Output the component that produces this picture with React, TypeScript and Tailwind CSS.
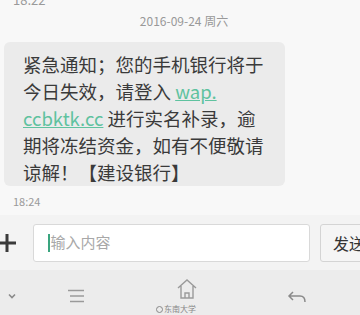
const font = { fontFamily: '"Noto Sans CJK SC", "Noto Sans", sans-serif' };

function ChevronDown() {
  return (
    <svg width="10" height="8" viewBox="0 0 10 8" fill="none" stroke="#8a8a8a" strokeWidth="1.6">
      <path d="M2 2.5 L5 5.5 L8 2.5" />
    </svg>
  );
}

function MenuIcon() {
  return (
    <svg width="18" height="14" viewBox="0 0 18 14" fill="none" stroke="#9a9a9a" strokeWidth="1.4">
      <path d="M1 1.5 H17 M3 7 H17 M3 12.5 H17" />
    </svg>
  );
}

function HomeIcon() {
  return (
    <svg width="22" height="22" viewBox="0 0 22 22" fill="none" stroke="#9a9a9a" strokeWidth="1.4">
      <path d="M2 10 L11 2 L20 10 M5 8 V20 H17 V8 M9 20 V15 H13 V20" />
    </svg>
  );
}

function BackIcon() {
  return (
    <svg width="20" height="14" viewBox="0 0 20 14" fill="none" stroke="#8a8a8a" strokeWidth="1.5">
      <path d="M6 2 L2 6 L6 10 M2 6 H13 Q18 6 18 12" />
    </svg>
  );
}

export default function App() {
  return (
    <div className="w-[360px] h-[315px] overflow-hidden bg-[#f8f8f8] flex flex-col" style={font}>
      <div className="h-[215px] shrink-0 flex flex-col">
        <div className="text-[13px] leading-[13px] text-[#9a9a9a] pl-[13px] -mt-[7px]">18:22</div>
        <div className="text-[12px] leading-[16px] text-[#999] text-center mt-[7px] pl-[8px]">2016-09-24 周六</div>
        <div className="ml-[4px] mt-[13px] w-[281px] h-[144px] bg-[#ebebeb] rounded-[6px] pl-[19px] pt-[9px] text-[18.5px] leading-[27px] text-[#3a3a3a]">
          <div>紧急通知；您的手机银行将于</div>
          <div>
            今日失效，请登入 <span className="text-[#5fc29f] underline">wap.</span>
          </div>
          <div>
            <span className="text-[#5fc29f] underline">ccbktk.cc</span> 进行实名补录，逾
          </div>
          <div>期将冻结资金，如有不便敬请</div>
          <div>谅解！【建设银行】</div>
        </div>
        <div className="text-[11px] leading-[12px] text-[#9a9a9a] pl-[13px] mt-[9px]">18:24</div>
      </div>
      <div className="h-[55px] shrink-0 bg-[#f3f3f3] flex items-center">
        <div className="w-[29px] shrink-0 flex items-center justify-start -ml-[4px] h-[38px]">
          <svg width="22" height="22" viewBox="0 0 22 22" fill="none" stroke="#3a3a3a" strokeWidth="3">
            <path d="M11 2 V20 M2 11 H20" />
          </svg>
        </div>
        <div className="ml-[8px] shrink-0 w-[277px] h-[38px] bg-white border border-[#d9d9d9] rounded-[3px] flex items-center pl-[14px]">
          <div className="w-[1.5px] h-[18px] bg-[#3aa57f] mr-[1px]" />
          <span className="text-[15px] text-[#a8a8a8]">输入内容</span>
        </div>
        <div className="ml-[10px] shrink-0 w-[50px] h-[38px] bg-[#f5f5f5] border border-[#d4d4d4] rounded-[3px] flex items-center pl-[12px] text-[16px] text-[#333] whitespace-nowrap">
          发送
        </div>
      </div>
      <div className="flex-1 bg-[#ececec] relative">
        <div className="absolute left-[7px] top-[22px]"><ChevronDown /></div>
        <div className="absolute left-[67px] top-[19px]"><MenuIcon /></div>
        <div className="absolute left-[176px] top-[8px]"><HomeIcon /></div>
        <div className="absolute left-[287px] top-[20px]"><BackIcon /></div>
        <div className="absolute left-[156px] top-[34px] text-[8px] leading-[10px] text-[#888] flex items-center gap-[1px]">
          <span className="inline-block w-[7px] h-[7px] rounded-full border border-[#888]" />
          <span>东南大学</span>
        </div>
      </div>
    </div>
  );
}
